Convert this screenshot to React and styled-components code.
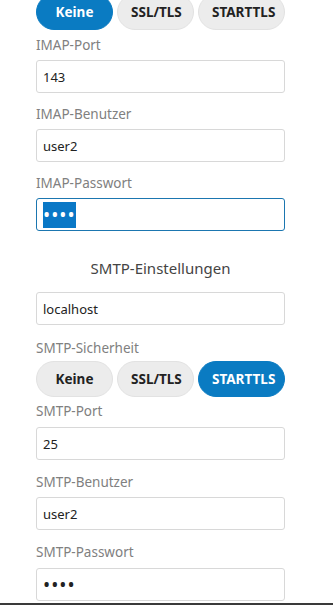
import React, { useEffect, useRef } from 'react';
import styled, { createGlobalStyle } from 'styled-components';

const GlobalStyle = createGlobalStyle`
  html, body {
    margin: 0;
    padding: 0;
    background: #fff;
    font-family: "Noto Sans", "Open Sans", sans-serif;
    overflow: hidden;
  }
`;

const Page = styled.div`
  width: 249px;
  padding: 0 48px 0 36px;
  margin-top: -6px;
  display: flex;
  flex-direction: column;
`;

const Segments = styled.div`
  display: flex;
  gap: 4px;
  margin-bottom: ${props => props.after || 0}px;
`;

const Segment = styled.button`
  height: 36px;
  min-width: 77px;
  padding: 0 13px;
  border-radius: 18px;
  border: 1px solid ${props => props.active ? '#0a7bc2' : '#e2e2e2'};
  background: ${props => props.active ? '#0a7bc2' : '#ececec'};
  color: ${props => props.active ? '#fff' : '#222'};
  font-family: "Noto Sans", "Open Sans", sans-serif;
  font-size: 13.5px;
  font-weight: 700;
  cursor: pointer;
  outline: none;
`;

const Field = styled.div`
  display: flex;
  flex-direction: column;
  margin-bottom: ${props => props.after || 0}px;
`;

const Label = styled.label`
  display: block;
  font-size: 13.5px;
  line-height: 18px;
  color: #808080;
  margin-bottom: ${props => props.gap || 6}px;
`;

const Input = styled.input`
  box-sizing: border-box;
  width: 100%;
  height: 33px;
  padding: 0 6px;
  border: 1px solid ${props => props.focused ? '#1b76b0' : '#d8d8d8'};
  border-radius: 3px;
  background: #fff;
  font-family: "Noto Sans", "Open Sans", sans-serif;
  font-size: ${props => props.type === 'password' ? 19 : 13}px;
  letter-spacing: ${props => props.type === 'password' ? 1 : 0}px;
  color: #222;
  outline: none;
  &::selection {
    background: #0a78c6;
    color: #fff;
  }
`;

const Heading = styled.div`
  font-size: 15px;
  line-height: 20px;
  color: #444;
  text-align: center;
  margin: 27px 0 14px;
`;

const WindowEdge = styled.div`
  position: fixed;
  left: 0;
  right: 0;
  bottom: 0;
  height: 2px;
  background: #3a3a3a;
`;

const modes = ['Keine', 'SSL/TLS', 'STARTTLS'];

const SecurityPicker = ({ value, after }) =>
  <Segments after={after}>
    { modes.map(m =>
      <Segment key={m} active={m === value}>{m}</Segment>
    ) }
  </Segments>;

export default function App() {
  const pwRef = useRef(null);

  useEffect(() => {
    if (pwRef.current) {
      pwRef.current.focus();
      pwRef.current.select();
    }
  }, []);

  return (
    <>
      <GlobalStyle />
      <Page>
        <SecurityPicker value="Keine" after={6} />

        <Field after={12}>
          <Label>IMAP-Port</Label>
          <Input defaultValue="143" />
        </Field>
        <Field after={12}>
          <Label>IMAP-Benutzer</Label>
          <Input defaultValue="user2" />
        </Field>
        <Field>
          <Label>IMAP-Passwort</Label>
          <Input ref={pwRef} type="password" focused defaultValue="1234" />
        </Field>

        <Heading>SMTP-Einstellungen</Heading>

        <Field after={14}>
          <Input defaultValue="localhost" />
        </Field>
        <Label gap={4}>SMTP-Sicherheit</Label>
        <SecurityPicker value="STARTTLS" after={5} />

        <Field after={13}>
          <Label gap={7}>SMTP-Port</Label>
          <Input defaultValue="25" />
        </Field>
        <Field after={13}>
          <Label>SMTP-Benutzer</Label>
          <Input defaultValue="user2" />
        </Field>
        <Field>
          <Label gap={7}>SMTP-Passwort</Label>
          <Input type="password" defaultValue="1234" />
        </Field>
      </Page>
      <WindowEdge />
    </>
  );
}
